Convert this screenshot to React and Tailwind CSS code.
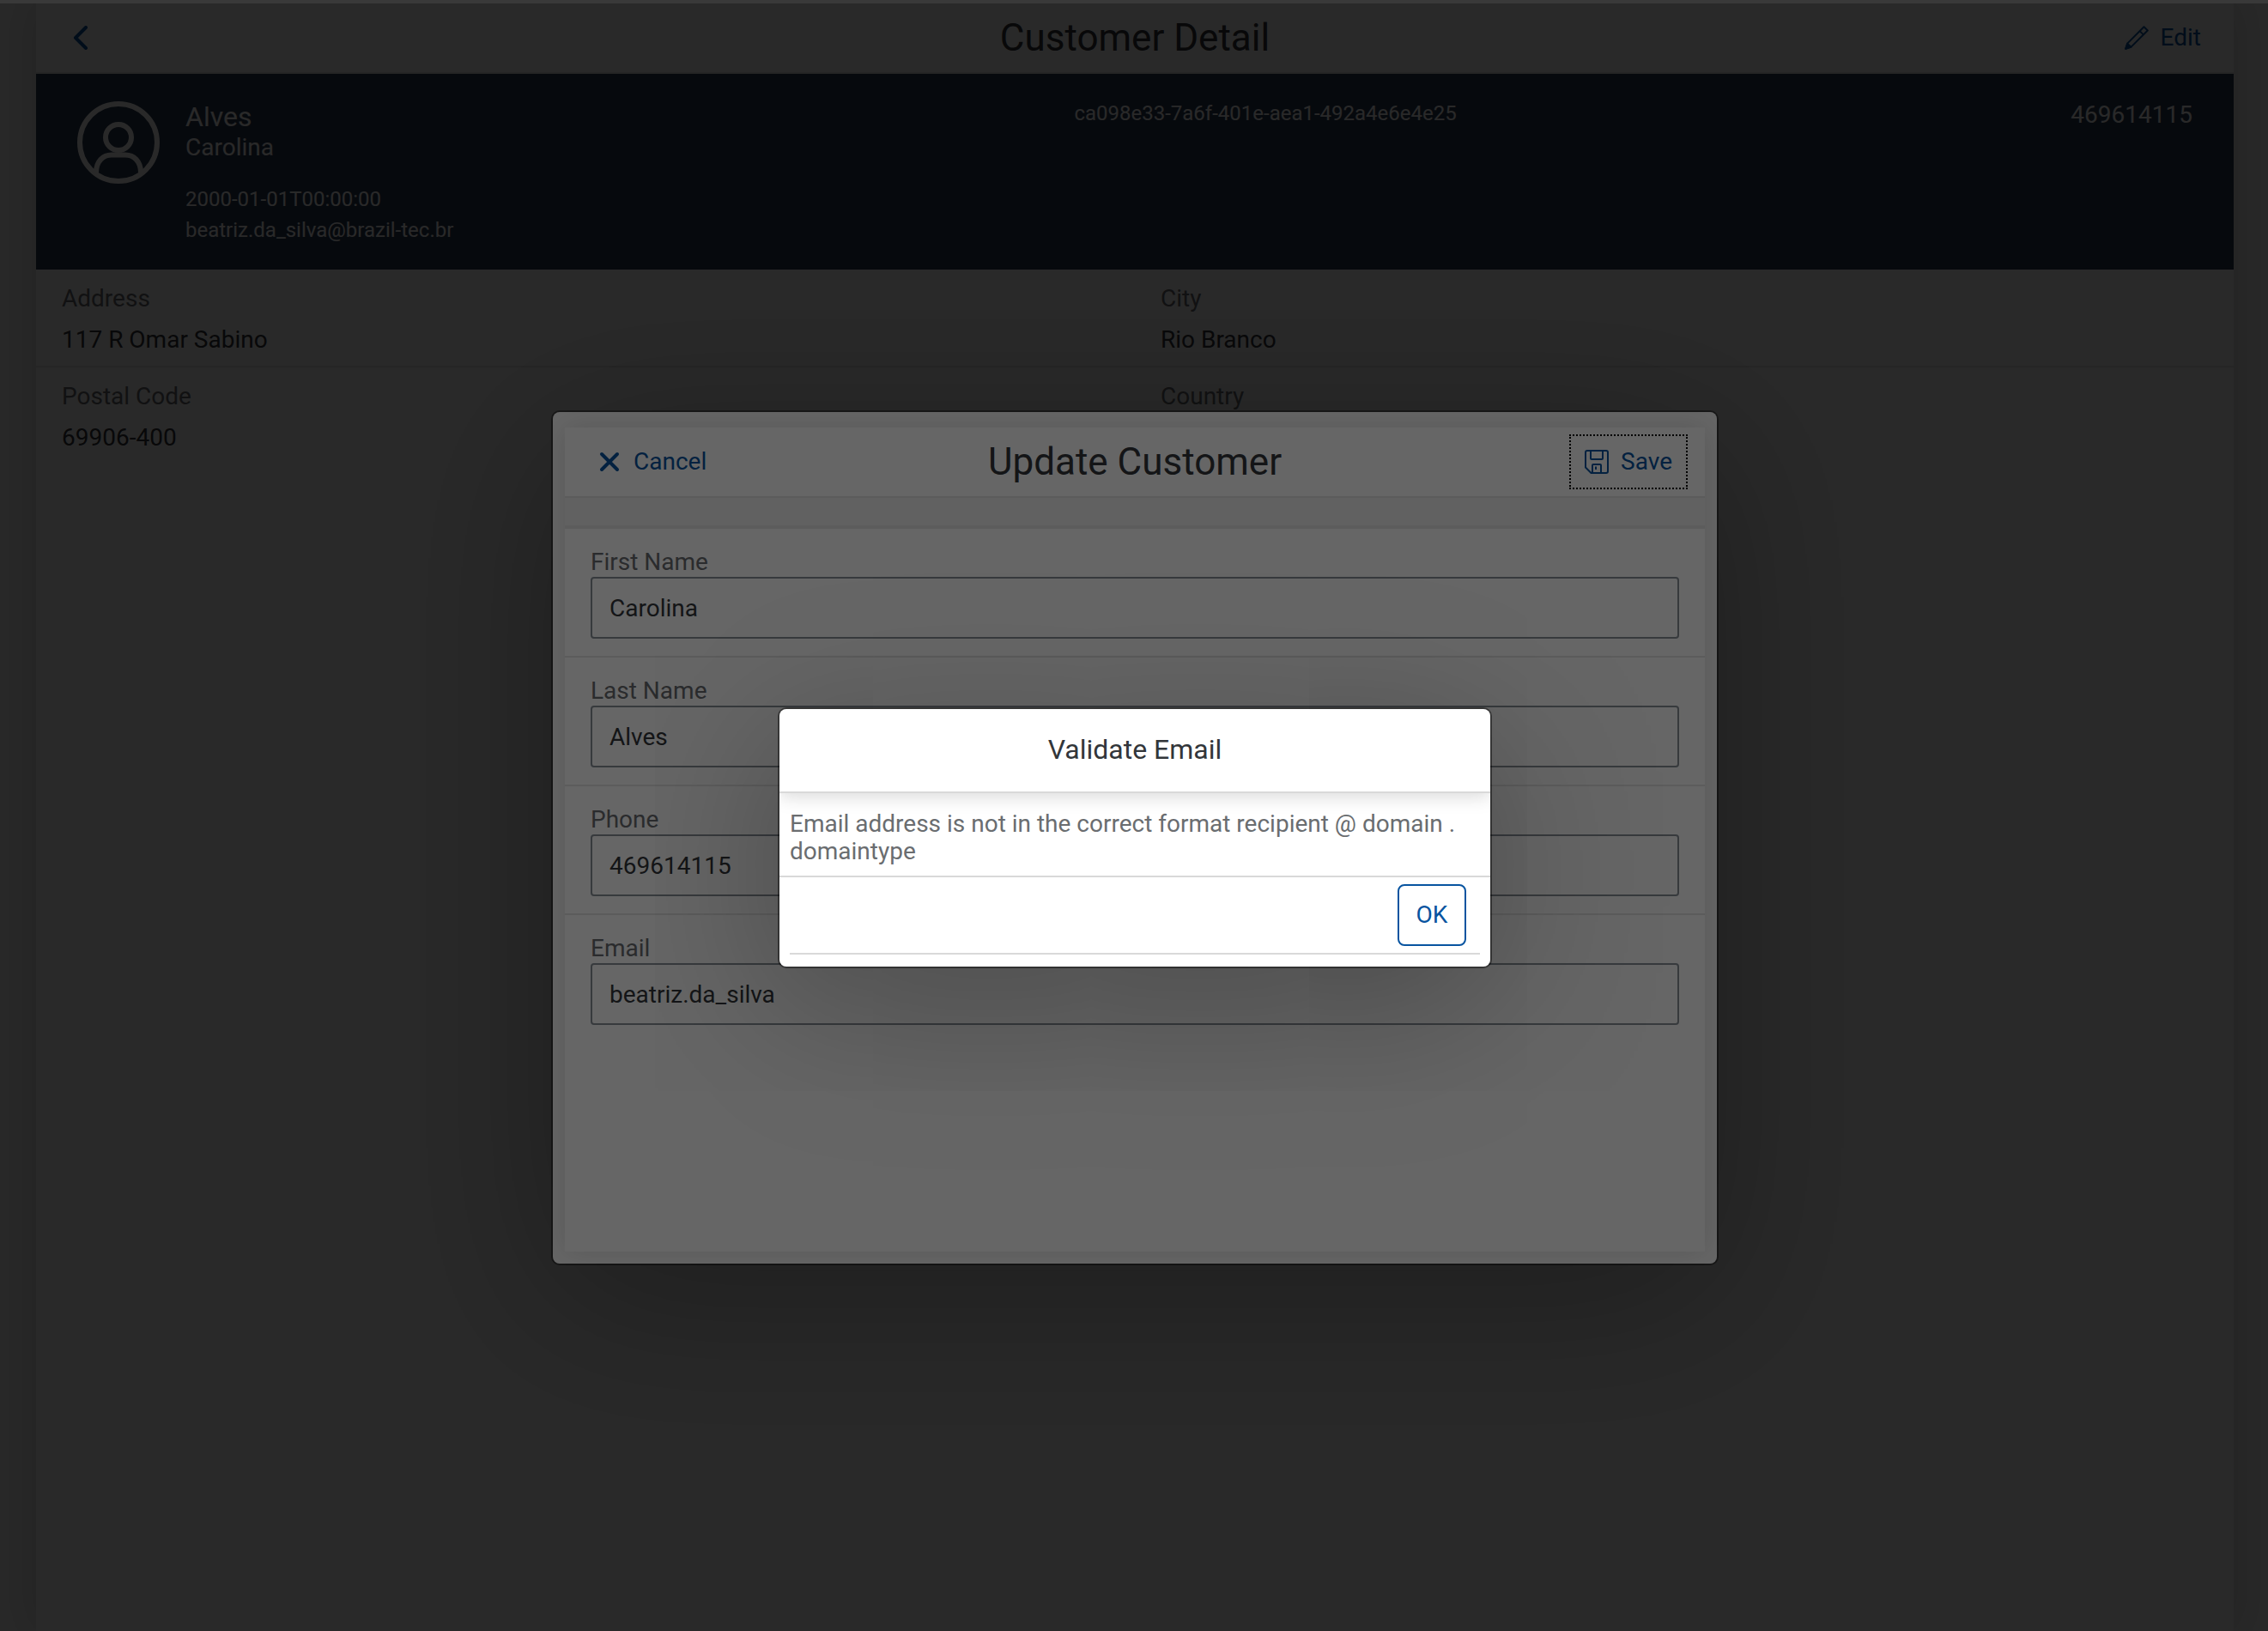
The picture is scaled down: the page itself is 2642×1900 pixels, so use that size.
const CUSTOMER = {
  lastName: 'Alves',
  firstName: 'Carolina',
  birthDate: '2000-01-01T00:00:00',
  email: 'beatriz.da_silva@brazil-tec.br',
  id: 'ca098e33-7a6f-401e-aea1-492a4e6e4e25',
  phone: '469614115',
};

const DETAILS = [
  { label: 'Address', value: '117 R Omar Sabino' },
  { label: 'City', value: 'Rio Branco' },
  { label: 'Postal Code', value: '69906-400' },
  { label: 'Country' },
];

const FIELDS = [
  { id: 'first-name', label: 'First Name', value: 'Carolina', type: 'text' },
  { id: 'last-name', label: 'Last Name', value: 'Alves', type: 'text' },
  { id: 'phone', label: 'Phone', value: '469614115', type: 'tel' },
  { id: 'email', label: 'Email', value: 'beatriz.da_silva', type: 'text' },
];

function BackIcon() {
  return (
    <svg viewBox="0 0 28 28" className="size-7" fill="none" stroke="currentColor" strokeWidth="4" strokeLinecap="round" strokeLinejoin="round" aria-hidden="true">
      <path d="M20 2 8 14l12 12" />
    </svg>
  );
}

function PencilIcon() {
  return (
    <svg viewBox="0 0 28 28" className="size-7" fill="none" stroke="currentColor" strokeWidth="2" strokeLinejoin="round" aria-hidden="true">
      <path d="M22.5 1.2 26.8 5.5 7.6 24.6 1.2 26.8 3.4 20.4Z" />
      <path d="M17.6 6.1 21.9 10.4" />
      <path d="M3.2 20.6 7.4 24.8 1.2 26.8Z" fill="currentColor" />
    </svg>
  );
}

function CloseIcon() {
  return (
    <svg viewBox="0 0 28 28" className="size-7" fill="none" stroke="currentColor" strokeWidth="4" strokeLinecap="round" aria-hidden="true">
      <path d="M5 5 23 23M23 5 5 23" />
    </svg>
  );
}

function SaveIcon() {
  return (
    <svg viewBox="0 0 28 28" className="size-7" fill="none" stroke="currentColor" strokeWidth="2" strokeLinejoin="round" aria-hidden="true">
      <path d="M3 1H25a2 2 0 0 1 2 2V25a2 2 0 0 1-2 2H7.5L1 20.500V3a2 2 0 0 1 2-2Z" />
      <path d="M7 1V10a1 1 0 0 0 1 1H20a1 1 0 0 0 1-1V1" />
      <path d="M9 27V18a1 1 0 0 1 1-1H18a1 1 0 0 1 1 1V27" />
      <path d="M13 19.500V23" />
    </svg>
  );
}

function AvatarIcon() {
  return (
    <svg viewBox="0 0 96 96" className="size-24 shrink-0" fill="none" stroke="currentColor" strokeWidth="6" aria-hidden="true">
      <circle cx="48" cy="48" r="45" />
      <circle cx="48" cy="42" r="15" />
      <path d="M22 83C22 70 30 62.500 40 62.500H56C66 62.500 74 70 74 83" />
    </svg>
  );
}

function ToolbarButton({ icon, children, className = '', ...rest }) {
  return (
    <button type="button" className={`flex h-16 items-center gap-3.5 px-[18px] text-[#0854a0] ${className}`} {...rest}>
      {icon}
      {children}
    </button>
  );
}

function PageHeader({ title, left, right }) {
  return (
    <header className="grid h-[82px] grid-cols-[1fr_auto_1fr] items-center border-b-2 border-[#e5e5e5] bg-white px-5">
      <div className="flex justify-start">{left}</div>
      <h1 className="text-[44px] leading-[52px] text-[#32363a]">{title}</h1>
      <div className="flex justify-end">{right}</div>
    </header>
  );
}

function DetailPage() {
  return (
    <div className="min-h-screen bg-[#f7f7f7] pl-[42px] pr-10">
      <main className="min-h-screen bg-white pt-1 shadow-[0_0_48px_rgba(0,0,0,0.15)]">
        <PageHeader
          title="Customer Detail"
          left={<ToolbarButton icon={<BackIcon />} aria-label="Back" />}
          right={<ToolbarButton icon={<PencilIcon />}>Edit</ToolbarButton>}
        />
        <section className="flex gap-[30px] bg-[#2a3a52] px-12 pb-7 pt-8 text-white">
          <AvatarIcon />
          <div className="grid grow grid-cols-[31fr_39fr]">
            <div>
              <h2 className="text-[32px] leading-9">{CUSTOMER.lastName}</h2>
              <p className="leading-9">{CUSTOMER.firstName}</p>
              <p className="mt-6 text-2xl leading-9">{CUSTOMER.birthDate}</p>
              <p className="text-2xl leading-9">{CUSTOMER.email}</p>
            </div>
            <div className="flex items-start justify-between">
              <p className="text-2xl leading-7">{CUSTOMER.id}</p>
              <p className="leading-8">{CUSTOMER.phone}</p>
            </div>
          </div>
        </section>
        <dl className="grid grid-cols-2">
          {DETAILS.map((item) => (
            <div key={item.label} className="h-[114px] border-b-2 border-[#e5e5e5] px-[30px] pt-2.5 leading-[48px] nth-[n+3]:border-transparent">
              <dt className="text-[#6a6d70]">{item.label}</dt>
              {item.value && <dd className="text-[#32363a]">{item.value}</dd>}
            </div>
          ))}
        </dl>
      </main>
    </div>
  );
}

function Overlay({ children }) {
  return (
    <div className="fixed inset-0 flex items-center justify-center bg-black/60 pl-0.5 pt-[52px]">
      <div className="max-w-full rounded-lg shadow-[0_0_0_2px_rgba(0,0,0,0.42),0_40px_200px_rgba(0,0,0,0.3)]">{children}</div>
    </div>
  );
}

function UpdateDialog() {
  return (
    <div
      role="dialog"
      aria-label="Update Customer"
      className="w-[1356px] max-w-full overflow-hidden rounded-lg bg-white px-3.5 pb-3.5 pt-[18px]"
    >
      <div className="min-h-[960px] bg-white shadow-[0_0_32px_rgba(0,0,0,0.15)]">
        <PageHeader
          title="Update Customer"
          left={<ToolbarButton icon={<CloseIcon />}>Cancel</ToolbarButton>}
          right={
            <ToolbarButton icon={<SaveIcon />} className="outline-2 -outline-offset-2 outline-dotted outline-black">
              Save
            </ToolbarButton>
          }
        />
        <form>
          <div className="h-9 border-b-4 border-[#e5e5e5] bg-[#f2f2f2]" />
          {FIELDS.map((field) => (
            <div key={field.id} className="flex flex-col border-b-2 border-[#e5e5e5] px-[30px] pb-5 pt-[22px] last:border-transparent">
              <label htmlFor={field.id} className="leading-[34px] text-[#6a6d70]">
                {field.label}
              </label>
              <input
                id={field.id}
                type={field.type}
                defaultValue={field.value}
                className="h-[72px] rounded-sm border-2 border-[#89919a] bg-white px-5 text-[#32363a]"
              />
            </div>
          ))}
        </form>
      </div>
    </div>
  );
}

function ValidationAlert() {
  return (
    <div
      role="alertdialog"
      aria-labelledby="alert-title"
      aria-describedby="alert-text"
      className="w-[828px] max-w-full overflow-hidden rounded-lg bg-white pb-3.5"
    >
      <h2
        id="alert-title"
        className="h-[98px] border-b-2 border-[#d9d9d9] text-center text-[32px] leading-[94px] text-[#32363a] shadow-[0_4px_20px_rgba(0,0,0,0.15)]"
      >
        Validate Email
      </h2>
      <p id="alert-text" className="border-b-2 border-[#d9d9d9] px-3 pb-3 pt-5 leading-8 text-[#6a6d70]">
        Email address is not in the correct format recipient @ domain . domaintype
      </p>
      <div className="mx-3 flex justify-end border-b-2 border-[#d9d9d9] px-4 py-2">
        <button type="button" className="h-[72px] w-20 rounded-lg border-2 border-[#0854a0] bg-white text-[#0854a0]">
          OK
        </button>
      </div>
    </div>
  );
}

export default function App() {
  return (
    <div className="font-[Roboto,sans-serif] text-[28px]">
      <div className="fixed inset-x-0 top-0 z-10 h-1 bg-[#393939]" />
      <DetailPage />
      <Overlay>
        <UpdateDialog />
      </Overlay>
      <Overlay>
        <ValidationAlert />
      </Overlay>
    </div>
  );
}
